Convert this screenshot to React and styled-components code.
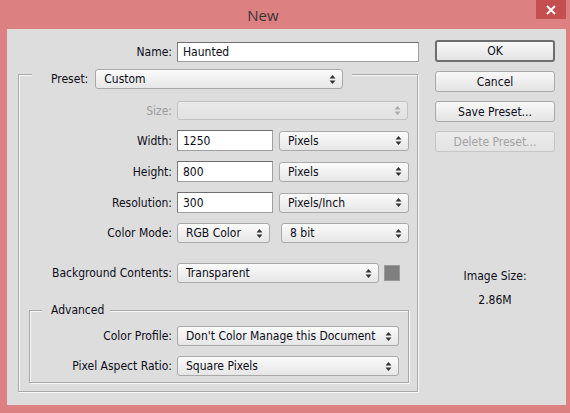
import React from "react";
import styled, { createGlobalStyle } from "styled-components";

const colors = {
  frame: "#dd8081",
  close: "#c54f50",
  panel: "#dddddd",
  text: "#0c0c18",
  muted: "#9b9b9b",
  groove: "#a9a9a9",
};

const GlobalStyle = createGlobalStyle`
  body {
    margin: 0;
    font-family: "DejaVu Sans Condensed", "DejaVu Sans", sans-serif;
    font-size: 12px;
    color: ${colors.text};
  }
`;

const Window = styled.div`
  width: 570px;
  height: 413px;
  box-sizing: border-box;
  padding: 0 4px 8px 7px;
  background: ${colors.frame};
  display: flex;
  flex-direction: column;
`;

const TitleBar = styled.div`
  height: 29px;
  display: flex;
  align-items: flex-start;
`;

const Title = styled.div`
  flex: 1;
  text-align: center;
  padding-right: 17px;
  font-family: "Open Sans", "Noto Sans", sans-serif;
  font-size: 15px;
  line-height: 30px;
  color: #3b3434;
`;

const CloseButton = styled.div`
  width: 30px;
  height: 19px;
  background: ${colors.close};
  display: flex;
  align-items: center;
  justify-content: center;
`;

const Body = styled.div`
  flex: 1;
  background: ${colors.panel};
  display: flex;
  gap: 16px;
  padding: 13px 11px 0 11px;
`;

const LeftCol = styled.div`
  width: 401px;
  display: flex;
  flex-direction: column;
`;

const NameRow = styled.div`
  display: grid;
  grid-template-columns: 154px 242px;
  column-gap: 5px;
  align-items: center;
`;

const Label = styled.span`
  text-align: right;
  white-space: nowrap;
  color: ${(p) => (p.$disabled ? colors.muted : colors.text)};
`;

const TextInput = styled.input`
  box-sizing: border-box;
  width: ${(p) => p.$width}px;
  height: ${(p) => p.$height || 21}px;
  margin: 0;
  border: 1px solid #7f7f7f;
  border-color: #6f6f6f #a0a0a0 #a0a0a0 #7a7a7a;
  background: #fff;
  padding: 0 0 0 5px;
  font-family: inherit;
  font-size: 12px;
  color: ${colors.text};
  outline: none;
`;

const Dropdown = styled.div`
  box-sizing: border-box;
  width: ${(p) => p.$width}px;
  height: ${(p) => p.$height || 20}px;
  border: 1px solid ${(p) => (p.$disabled ? "#c2c2c2" : "#a9a9a9")};
  border-radius: 3px;
  background: ${(p) =>
    p.$disabled
      ? "linear-gradient(#e9e9e9, #e2e2e2)"
      : "linear-gradient(#fbfbfb, #e6e6e6)"};
  display: flex;
  align-items: center;
  justify-content: space-between;
  padding: 0 6px 0 8px;
  white-space: nowrap;
  color: ${colors.text};
`;

const GroupBox = styled.div`
  display: flex;
  flex-direction: column;
  border: 1px solid ${colors.groove};
  box-shadow: inset 1px 1px 0 #f7f7f7, 1px 1px 0 #f7f7f7;
`;

const OuterGroup = styled(GroupBox)`
  margin-top: 12px;
  width: 400px;
  box-sizing: border-box;
`;

const AdvancedGroup = styled(GroupBox)`
  margin: 27px 8px 8px 10px;
  padding-bottom: 6px;
`;

const GroupHeader = styled.div`
  align-self: flex-start;
  display: flex;
  align-items: center;
  gap: 7px;
  background: ${colors.panel};
  margin: ${(p) => p.$margin};
  padding: ${(p) => p.$padding};
  line-height: 15px;
`;

const Fields = styled.div`
  display: flex;
  flex-direction: column;
  gap: 10px;
  margin-top: ${(p) => p.$top}px;
`;

const FieldRow = styled.div`
  display: grid;
  grid-template-columns: ${(p) => p.$labelWidth}px auto;
  column-gap: 5px;
  align-items: center;
  margin-top: ${(p) => p.$top || 0}px;
`;

const Controls = styled.div`
  display: flex;
  align-items: center;
  gap: ${(p) => p.$gap || 6}px;
`;

const Swatch = styled.div`
  width: 16px;
  height: 16px;
  box-sizing: border-box;
  background: #7f7f7f;
  border: 1px solid #999;
  margin-left: -1px;
`;

const RightCol = styled.div`
  width: 120px;
  margin-top: -2px;
  display: flex;
  flex-direction: column;
`;

const Buttons = styled.div`
  display: flex;
  flex-direction: column;
  gap: 9px;
`;

const Button = styled.div`
  box-sizing: border-box;
  height: ${(p) => (p.$default ? 22 : 21)}px;
  border: ${(p) => (p.$default ? "2px solid #6e6e6e" : "1px solid #a9a9a9")};
  border-radius: 3px;
  background: ${(p) =>
    p.$disabled
      ? "linear-gradient(#ebebeb, #e3e3e3)"
      : "linear-gradient(#f8f8f8, #e4e4e4)"};
  border-color: ${(p) => (p.$disabled ? "#c6c6c6" : undefined)};
  color: ${(p) => (p.$disabled ? "#a2a2a2" : colors.text)};
  display: flex;
  align-items: center;
  justify-content: center;
`;

const ImageSize = styled.div`
  margin-top: 116px;
  text-align: center;
  line-height: 16px;
  display: flex;
  flex-direction: column;
  gap: 8px;
`;

const Arrows = ({ disabled }) => (
  <svg width="7" height="11" viewBox="0 0 7 11">
    <g fill={disabled ? "#a8a8a8" : "#333"}>
      <path d="M0.5 4.5 L3.5 1 L6.5 4.5 Z" />
      <path d="M0.5 6.5 L3.5 10 L6.5 6.5 Z" />
    </g>
  </svg>
);

const Select = ({ children, width, height, disabled }) => (
  <Dropdown $width={width} $height={height} $disabled={disabled}>
    <span>{children}</span>
    <Arrows disabled={disabled} />
  </Dropdown>
);

const App = () => {
  return (
    <Window>
      <GlobalStyle />
      <TitleBar>
        <Title>New</Title>
        <CloseButton>
          <svg width="10" height="10" viewBox="0 0 10 10">
            <path d="M1 1 L9 9 M9 1 L1 9" stroke="#fff" strokeWidth="1.8" />
          </svg>
        </CloseButton>
      </TitleBar>
      <Body>
        <LeftCol>
          <NameRow>
            <Label>Name:</Label>
            <TextInput $width={242} $height={20} defaultValue="Haunted" />
          </NameRow>

          <OuterGroup>
            <GroupHeader $margin="-6px 0 0 13px" $padding="0 9px 0 19px">
              <Label>Preset:</Label>
              <Select width={248}>Custom</Select>
            </GroupHeader>

            <Fields $top={12}>
              <FieldRow $labelWidth={153}>
                <Label $disabled>Size:</Label>
                <Select width={231} height={19} disabled />
              </FieldRow>
              <FieldRow $labelWidth={153}>
                <Label>Width:</Label>
                <Controls>
                  <TextInput $width={96} defaultValue="1250" />
                  <Select width={130}>Pixels</Select>
                </Controls>
              </FieldRow>
              <FieldRow $labelWidth={153}>
                <Label>Height:</Label>
                <Controls>
                  <TextInput $width={96} defaultValue="800" />
                  <Select width={130}>Pixels</Select>
                </Controls>
              </FieldRow>
              <FieldRow $labelWidth={153}>
                <Label>Resolution:</Label>
                <Controls>
                  <TextInput $width={96} defaultValue="300" />
                  <Select width={130}>Pixels/Inch</Select>
                </Controls>
              </FieldRow>
              <FieldRow $labelWidth={153}>
                <Label>Color Mode:</Label>
                <Controls $gap={11}>
                  <Select width={93}>RGB Color</Select>
                  <Select width={128}>8 bit</Select>
                </Controls>
              </FieldRow>
              <FieldRow $labelWidth={153} $top={10}>
                <Label>Background Contents:</Label>
                <Controls $gap={6}>
                  <Select width={202}>Transparent</Select>
                  <Swatch />
                </Controls>
              </FieldRow>
            </Fields>

            <AdvancedGroup>
              <GroupHeader $margin="-8px 0 0 12px" $padding="0 6px 0 9px">
                Advanced
              </GroupHeader>
              <Fields $top={8}>
                <FieldRow $labelWidth={142}>
                  <Label>Color Profile:</Label>
                  <Select width={222}>Don't Color Manage this Document</Select>
                </FieldRow>
                <FieldRow $labelWidth={142}>
                  <Label>Pixel Aspect Ratio:</Label>
                  <Select width={222}>Square Pixels</Select>
                </FieldRow>
              </Fields>
            </AdvancedGroup>
          </OuterGroup>
        </LeftCol>

        <RightCol>
          <Buttons>
            <Button $default>OK</Button>
            <Button>Cancel</Button>
            <Button>Save Preset...</Button>
            <Button $disabled>Delete Preset...</Button>
          </Buttons>
          <ImageSize>
            <span>Image Size:</span>
            <span>2.86M</span>
          </ImageSize>
        </RightCol>
      </Body>
    </Window>
  );
};

export default App;
